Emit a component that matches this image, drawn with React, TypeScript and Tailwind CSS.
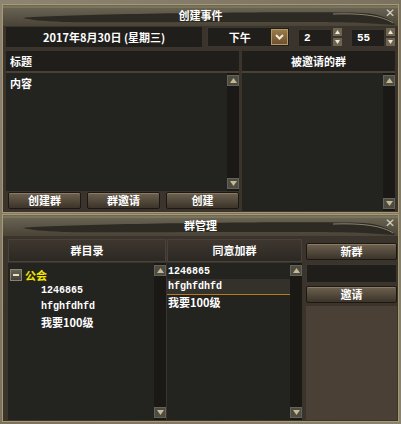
import React from "react";

const cjk = "font-['Noto_Sans_CJK_SC','Noto_Sans',sans-serif]";
const mono = "font-['Liberation_Mono','Noto_Sans_CJK_SC',monospace]";

function Arrow({ up }: { up?: boolean }) {
  return (
    <div className="w-[12px] h-[11px] bg-[#4c4c42] border border-[#63635a] flex items-center justify-center">
      <svg width="7" height="5" viewBox="0 0 7 5">
        {up ? <polygon points="3.5,0 7,5 0,5" fill="#c8b890" /> : <polygon points="0,0 7,0 3.5,5" fill="#c8b890" />}
      </svg>
    </div>
  );
}

function ScrollBar() {
  return (
    <div className="w-[12px] h-full bg-[#1a1916] flex flex-col justify-between py-[2px]">
      <Arrow up />
      <Arrow />
    </div>
  );
}

function TitleBar({ title }: { title: string }) {
  return (
    <div className="relative h-[21px] bg-gradient-to-b from-[#6e6856] via-[#5a5546] to-[#4a4438] flex items-center justify-center overflow-hidden">
      <svg className="absolute inset-0" width="397" height="21" viewBox="0 0 397 21">
        <path d="M20 13 C60 9 300 6 360 8 C378 9 388 14 392 20 L360 18 C300 16 120 18 60 17 C40 16 28 15 20 13 Z" fill="#2c2a22" />
        <path d="M330 9 C360 8 380 11 390 18" stroke="#c9c2a6" strokeWidth="1" fill="none" opacity="0.6" />
        <path d="M0 2 L397 2" stroke="#8a836c" strokeWidth="1" />
      </svg>
      <span className={`relative ${cjk} text-[11px] font-bold text-white`}>{title}</span>
      <span className="absolute right-[3px] top-[2px] text-[#d8d2c0] text-[12px] leading-none">✕</span>
    </div>
  );
}

function Btn({ label }: { label: string }) {
  return (
    <div className={`h-[17px] rounded-[2px] border border-[#1c1813] bg-gradient-to-b from-[#6e6250] to-[#3c342a] shadow-[inset_0_1px_0_#8a7c64] flex items-center justify-center ${cjk} text-[11px] font-bold text-white`}>
      {label}
    </div>
  );
}

function SmallArrow({ up }: { up?: boolean }) {
  return (
    <div className="w-[9px] h-[8px] bg-[#6e6452] flex items-center justify-center">
      <svg width="5" height="4" viewBox="0 0 5 4">
        {up ? <polygon points="2.5,0 5,4 0,4" fill="#f0e8d0" /> : <polygon points="0,0 5,0 2.5,4" fill="#f0e8d0" />}
      </svg>
    </div>
  );
}

function Spin({ value }: { value: string }) {
  return (
    <div className="flex h-[20px] gap-[1px]">
      <div className={`w-[34px] h-[18px] mt-[2px] bg-[#1f1e1b] border border-[#3c3630] flex items-center pl-[5px] ${mono} text-[11px] font-bold text-white`}>
        {value}
      </div>
      <div className="flex flex-col justify-between py-[1px]">
        <SmallArrow up />
        <SmallArrow />
      </div>
    </div>
  );
}

function Header({ label, className }: { label: string; className?: string }) {
  return (
    <div className={`h-[20px] bg-[#1f1e1b] flex items-center ${cjk} text-[11px] font-bold text-white ${className ?? ""}`}>
      {label}
    </div>
  );
}

export default function App() {
  return (
    <div className="w-[401px] h-[424px] bg-gradient-to-br from-[#8d8472] via-[#7a715f] to-[#8a8270] overflow-hidden pt-[4px] px-[2px]">
      {/* 创建事件 */}
      <div className="h-[209px] border border-[#a8996f] bg-[#3b342d] flex flex-col">
        <TitleBar title="创建事件" />
        <div className="flex items-center h-[20px] mt-[1px] px-[3px]">
          <div className={`w-[197px] h-[20px] bg-[#1f1e1b] flex items-center justify-center ${cjk} text-[11px] font-bold text-white`}>
            2017年8月30日 (星期三)
          </div>
          <div className="ml-[5px] w-[83px] h-[20px] bg-[#1f1e1b] border border-[#3c3630] flex items-center">
            <span className={`flex-1 text-center ${cjk} text-[11px] font-bold text-white`}>下午</span>
            <div className="w-[17px] h-[16px] mr-[1px] bg-gradient-to-b from-[#9a7a48] to-[#6e5230] border border-[#b89a66] flex items-center justify-center">
              <svg width="9" height="6" viewBox="0 0 9 6">
                <path d="M1 1 L4.5 4.5 L8 1" stroke="#f4ecd8" strokeWidth="2" fill="none" />
              </svg>
            </div>
          </div>
          <div className="ml-[8px]">
            <Spin value="2" />
          </div>
          <div className="ml-[9px]">
            <Spin value="55" />
          </div>
        </div>
        <div className="flex gap-[3px] mt-[4px] px-[3px] flex-1 min-h-0">
          <div className="w-[233px] flex flex-col">
            <Header label="标题" className="pl-[4px]" />
            <div className="h-[2px] bg-[#4a4036]" />
            <div className="h-[118px] bg-[#23231f] flex">
              <div className={`flex-1 pl-[4px] pt-[3px] ${cjk} text-[11px] font-bold text-white leading-[14px]`}>内容</div>
              <ScrollBar />
            </div>
            <div className="grid grid-cols-3 gap-[6px] pl-[2px] mt-[1px]">
              <Btn label="创建群" />
              <Btn label="群邀请" />
              <Btn label="创建" />
            </div>
          </div>
          <div className="w-[153px] flex flex-col pb-[1px]">
            <Header label="被邀请的群" className="justify-center" />
            <div className="h-[2px] bg-[#4a4036]" />
            <div className="flex-1 bg-[#23231f] flex">
              <div className="flex-1" />
              <ScrollBar />
            </div>
          </div>
        </div>
      </div>

      {/* 群管理 */}
      <div className="mt-[1px] h-[208px] border border-[#a8996f] bg-[#3b342d] flex flex-col">
        <TitleBar title="群管理" />
        <div className="flex mt-[3px] px-[5px] pr-[1px] flex-1 min-h-0 pb-[1px]">
          <div className="w-[158px] flex flex-col">
            <div className={`h-[23px] bg-gradient-to-b from-[#3e3730] to-[#2c2823] border border-[#4a4238] flex items-center justify-center ${cjk} text-[11px] font-bold text-white`}>
              群目录
            </div>
            <div className="flex-1 bg-[#23231f] flex mt-[1px]">
              <div className={`flex-1 pt-[4px] ${cjk} text-[11px] font-bold text-white leading-[16px]`}>
                <div className="flex items-center gap-[3px] pl-[2px]">
                  <div className="w-[12px] h-[12px] bg-gradient-to-b from-[#6a6454] to-[#45403a] border border-[#8a8270] flex items-center justify-center">
                    <div className="w-[6px] h-[2px] bg-[#e8e0c8]" />
                  </div>
                  <span className="text-[#f2e600]">公会</span>
                </div>
                <div className={`pl-[33px] ${mono} text-[10px]`}>1246865</div>
                <div className={`pl-[33px] ${mono} text-[10px]`}>hfghfdhfd</div>
                <div className="pl-[33px] leading-[15px]">我要100级</div>
              </div>
              <ScrollBar />
            </div>
          </div>
          <div className="w-[1px]" />
          <div className="w-[135px] flex flex-col">
            <div className={`h-[23px] bg-gradient-to-b from-[#3e3730] to-[#2c2823] border border-[#4a4238] flex items-center justify-center ${cjk} text-[11px] font-bold text-white`}>
              同意加群
            </div>
            <div className="flex-1 bg-[#23231f] flex mt-[1px]">
              <div className={`flex-1 pt-[2px] ${cjk} text-[11px] font-bold text-white leading-[15px]`}>
                <div className={`pl-[1px] ${mono} text-[10px] leading-[14px]`}>1246865</div>
                <div className={`pl-[1px] ${mono} text-[10px] leading-[15px] bg-[#34302a] border-b border-[#b87a20]`}>hfghfdhfd</div>
                <div className="pl-[1px]">我要100级</div>
              </div>
              <ScrollBar />
            </div>
          </div>
          <div className="flex-1 ml-[4px] flex flex-col pt-[4px]">
            <Btn label="新群" />
            <div className="mt-[4px] h-[19px] bg-[#1f1e1b] border border-[#3c3630]" />
            <div className="mt-[3px]">
              <Btn label="邀请" />
            </div>
            <div className="flex-1 mt-[3px] bg-[#4a4035]" />
          </div>
        </div>
      </div>
    </div>
  );
}
